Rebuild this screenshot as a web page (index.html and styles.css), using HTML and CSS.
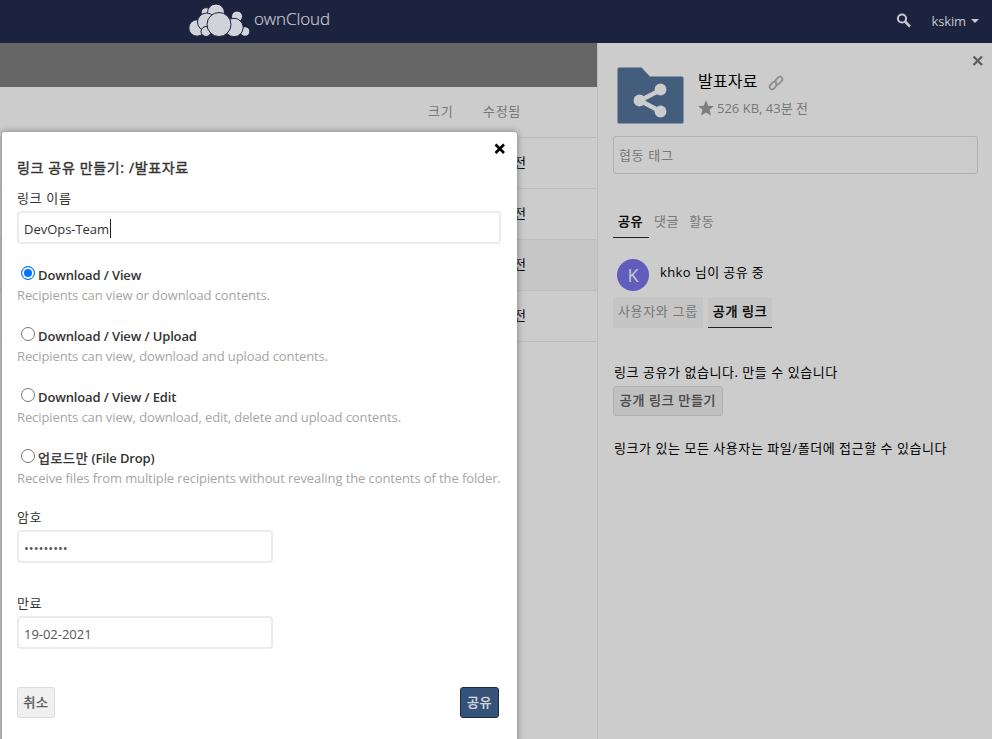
FILE: index.html
```html
<!DOCTYPE html>
<html lang="ko">
<head>
<meta charset="utf-8">
<title>ownCloud</title>
<link rel="stylesheet" href="styles.css">
</head>
<body>
<header class="topbar">
  <div class="brand">
    <svg class="logo" width="62" height="35" viewBox="0 0 62 35">
      <g fill="#d2d3da" stroke="#1b233f" stroke-width="1">
        <circle cx="17" cy="8.500" r="4.800"/><circle cx="48" cy="12.500" r="5.500"/>
        <circle cx="27" cy="8.500" r="8.500"/>
        <circle cx="8" cy="24" r="8.200"/><circle cx="17.500" cy="18" r="9"/>
        <circle cx="56" cy="27.500" r="4.800"/><circle cx="45" cy="23.500" r="9.200"/>
        <circle cx="17" cy="27.500" r="5"/><circle cx="30" cy="20.500" r="12"/>
      </g>
    </svg>
    <span class="brand-name">ownCloud</span>
  </div>
  <div class="account">
    <svg width="16" height="16" viewBox="0 0 16 16"><circle cx="6" cy="5.500" r="4.100" fill="none" stroke="#c9cace" stroke-width="2"/><path d="M9 8.500l5 5" stroke="#c9cace" stroke-width="2.500"/></svg>
    <span class="user">kskim</span>
    <span class="arrow"></span>
  </div>
</header>
<div class="content">
  <main class="files">
    <div class="controls"></div>
    <div class="row head"><span class="size">크기</span><span>수정됨</span></div>
    <div class="row"><span class="date">전</span></div>
    <div class="row"><span class="date">전</span></div>
    <div class="row active"><span class="date">전</span></div>
    <div class="row"><span class="date">전</span></div>
  </main>
  <aside class="sidebar">
    <svg class="side-close" width="12" height="12" viewBox="0 0 12 12"><path d="M1.500 1.500l8.500 8.500M10 1.500L1.500 10" stroke="#5e5e5e" stroke-width="2.400"/></svg>
    <div class="info">
      <svg width="68" height="58" viewBox="0 0 68 58">
        <path d="M2 .5H24.500L33 9.500H65Q66.500 9.500 66.500 11V55Q66.500 56.500 65 56.500H2Q.5 56.500 .5 55V2Q.5.5 2 .5Z" fill="#445d7d"/>
        <path d="M43.500 23L23 33.500L43.500 44.500" fill="none" stroke="#ccc" stroke-width="4.500"/>
        <circle cx="43.500" cy="22.500" r="5.900" fill="#ccc"/><circle cx="22.500" cy="33.500" r="5.900" fill="#ccc"/><circle cx="43.500" cy="44.500" r="5.900" fill="#ccc"/>
      </svg>
      <div class="details">
        <div class="name"><span>발표자료</span>
          <svg width="16" height="16" viewBox="0 0 16 16"><g fill="none" stroke="#8f8f8f" stroke-width="1.800" stroke-linecap="round"><path d="M7.200 5.700L10 2.600Q11.700.9 13.500 2.300Q15.300 4.100 13.700 5.900L11.200 8.600Q9.400 10.100 7.700 8.700"/><path d="M8.800 10.300L6 13.400Q4.300 15.100 2.500 13.700Q.7 11.900 2.300 10.100L4.800 7.400Q6.600 5.900 8.300 7.300"/></g></svg>
        </div>
        <div class="meta">
          <svg width="16" height="16" viewBox="0 0 16 16"><path d="M8 .2L10.200 5.700L16 6.100L11.500 9.800L13 15.600L8 12.400L3 15.600L4.500 9.800L0 6.100L5.800 5.700Z" fill="#7d7d7d"/></svg>
          <span>526 KB, 43분 전</span>
        </div>
      </div>
    </div>
    <div class="tags ko">협동 태그</div>
    <nav class="tabs ko"><span class="tab selected">공유</span><span class="tab">댓글</span><span class="tab">활동</span></nav>
    <div class="owner"><span class="avatar">K</span><span class="owner-text">khko 님이 공유 중</span></div>
    <div class="subtabs ko"><span class="subtab">사용자와 그룹</span><span class="subtab chosen">공개 링크</span></div>
    <p class="empty ko">링크 공유가 없습니다. 만들 수 있습니다</p>
    <button class="create ko">공개 링크 만들기</button>
    <p class="notice ko">링크가 있는 모든 사용자는 파일/폴더에 접근할 수 있습니다</p>
  </aside>
</div>
<section class="dialog">
  <svg class="dialog-close" width="12" height="12" viewBox="0 0 12 12"><path d="M1.500 1.500l8.500 8.500M10 1.500L1.500 10" stroke="#000" stroke-width="2.600"/></svg>
  <h1 class="title">링크 공유 만들기: /발표자료</h1>
  <div class="label name-label ko">링크 이름</div>
  <div class="field wide"><span>DevOps-Team</span><i class="caret"></i></div>
  <div class="option"><div class="choice"><i class="radio on"></i><b>Download / View</b></div><p>Recipients can view or download contents.</p></div>
  <div class="option"><div class="choice"><i class="radio"></i><b>Download / View / Upload</b></div><p>Recipients can view, download and upload contents.</p></div>
  <div class="option"><div class="choice"><i class="radio"></i><b>Download / View / Edit</b></div><p>Recipients can view, download, edit, delete and upload contents.</p></div>
  <div class="option"><div class="choice"><i class="radio"></i><b><span class="drop">업로드만</span> (File Drop)</b></div><p>Receive files from multiple recipients without revealing the contents of the folder.</p></div>
  <div class="label pass-label ko">암호</div>
  <div class="field muted">•••••••••</div>
  <div class="label date-label ko">만료</div>
  <div class="field muted">19-02-2021</div>
  <div class="actions"><button class="btn ko">취소</button><button class="btn primary ko">공유</button></div>
</section>
</body>
</html>
```
FILE: styles.css
```css
* { box-sizing: border-box; }
body { margin: 0; width: 992px; height: 739px; overflow: hidden; position: relative; background: #ccc; color: #000; font: 13px/20px "Open Sans", "Noto Sans CJK KR", sans-serif; }
p, h1 { margin: 0; }
svg { display: block; flex: none; }
button { font: inherit; }
span, p, b, h1 { white-space: nowrap; }
.ko { letter-spacing: .66px; }
.topbar { height: 43px; background: #1b233f; display: flex; justify-content: space-between; padding: 0 13px 0 189px; }
.brand { display: flex; padding-top: 4px; gap: 3px; }
.brand-name { color: #c9cace; font-size: 17px; line-height: 30px; font-weight: 300; letter-spacing: -.1px; -webkit-text-stroke: .2px #c9cace; }
.account { display: flex; align-items: center; color: #c5c6cb; padding-bottom: 1px; }
.user { margin-left: 20px; letter-spacing: -.15px; }
.arrow { border: 4px solid transparent; border-top-color: #c9cace; border-bottom: 0; margin-left: 5px; }
.content { display: flex; height: 696px; }
.files { width: 597px; }
.controls { height: 44px; background: #666; }
.row { height: 51px; border-bottom: 1px solid #bdbdbd; display: flex; align-items: center; padding-bottom: 2px; }
.row.active { background: #c6c6c6; }
.head { color: #777; padding-left: 428px; letter-spacing: .7px; }
.size { width: 55px; }
.date { margin-left: 514px; }
.sidebar { width: 395px; border-left: 1px solid #bdbdbd; padding: 24px 14px 0 15px; position: relative; }
.side-close { position: absolute; top: 12px; right: 8px; }
.info { display: flex; padding-left: 4px; gap: 13px; height: 69px; }
.name { display: flex; align-items: center; gap: 10px; font-size: 16px; height: 27px; letter-spacing: .2px; }
.name svg { margin-top: 5px; }
.meta { display: flex; align-items: center; gap: 3px; color: #777; height: 28px; letter-spacing: 0; }
.meta span { margin-top: -1px; }
.tags { height: 38px; border: 1px solid #b0b0b0; border-radius: 3px; color: #777; padding: 8px 5px; }
.tabs { display: flex; margin-top: 33px; color: #777; }
.tab { height: 31px; padding: 4px 5px; }
.selected, .chosen { color: #000; border-bottom: 1px solid #222; -webkit-text-stroke: .45px currentColor; }
.selected { width: 36px; }
.owner { display: flex; margin: 21px 0 0 4px; gap: 11px; height: 38px; }
.owner-text { padding-top: 3px; letter-spacing: .4px; }
.avatar { width: 32px; height: 32px; border-radius: 50%; background: #605dbc; color: #ccc; font-size: 18px; line-height: 33px; text-align: center; }
.subtabs { display: flex; gap: 5px; }
.subtab { height: 31px; background: #c5c5c5; color: #777; padding: 4px 5px; }
.subtab.chosen { color: #000; }
.empty { margin-top: 34px; padding-left: 1px; letter-spacing: .55px; }
.create { display: block; margin-top: 4px; height: 30px; width: 110px; padding: 0 0 2px; color: #444; background: #c0c0c0; border: 1px solid #b0b0b0; border-radius: 3px; -webkit-text-stroke: .35px currentColor; }
.notice { margin-top: 22px; padding-left: 1px; letter-spacing: .55px; }
.dialog { position: absolute; left: 2px; top: 132px; width: 515px; height: 620px; padding: 26px 16px 0 15px; background: #fff; border-radius: 3px 3px 0 0; box-shadow: 0 0 7px #777; color: #333; }
.dialog-close { position: absolute; top: 11px; right: 11px; }
.title { font-size: 14px; line-height: 20px; font-weight: 400; letter-spacing: .65px; -webkit-text-stroke: .4px currentColor; }
.name-label { margin: 10px 0 3px; }
.field { height: 33px; width: 256px; border: 2px solid #ebebeb; border-radius: 4px; padding: 3px 5px 0; display: flex; line-height: 26px; letter-spacing: -.03px; }
.wide { width: 484px; }
.muted { color: #555; }
.caret { width: 1px; height: 19px; margin: 3px 0 0 1px; background: #222; }
.option { margin-top: 21px; height: 40px; }
.choice { display: flex; padding-left: 4px; gap: 3px; }
.choice b { font-weight: 600; letter-spacing: -.13px; }
.drop { font-weight: 400; letter-spacing: .6px; -webkit-text-stroke: .4px currentColor; }
.radio { width: 14px; height: 14px; border: 1px solid #767676; border-radius: 50%; margin-top: 1px; }
.radio.on { border-color: #0075ff; background: #0075ff; box-shadow: inset 0 0 0 2px #fff; }
.option p { color: #a5a5a5; letter-spacing: -.1px; }
.pass-label { margin: 19px 0 3px; }
.date-label { margin: 30px 0 3px; }
.actions { display: flex; justify-content: space-between; margin-top: 38px; padding-right: 2px; }
.btn { width: 38px; height: 31px; padding: 0 0 1px; border: 1px solid #ddd; border-radius: 3px; background: #f0f0f0; color: #555; -webkit-text-stroke: .35px currentColor; }
.primary { background: #35537a; border-color: #1d2d44; color: #ddd; width: 39px; }
```
